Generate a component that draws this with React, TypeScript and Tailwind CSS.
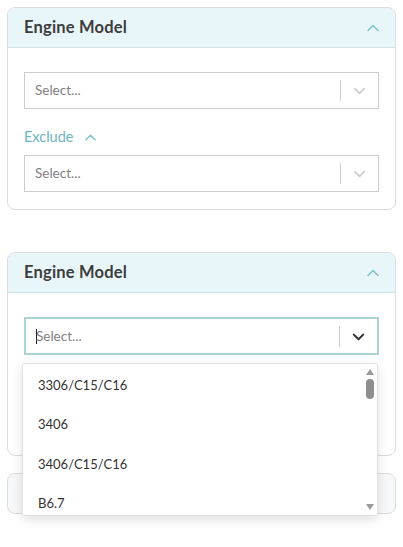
import React from "react";

const font = { fontFamily: "Lato, 'Noto Sans', sans-serif" };

function ChevronUp({ className = "" }: { className?: string }) {
  return (
    <svg viewBox="0 0 16 16" className={className} fill="none" stroke="currentColor" strokeWidth="1.6" strokeLinecap="round" strokeLinejoin="round">
      <path d="M3 10.5 L8 5.5 L13 10.5" />
    </svg>
  );
}

function ChevronDown({ className = "", strokeWidth = 1.6 }: { className?: string; strokeWidth?: number }) {
  return (
    <svg viewBox="0 0 16 16" className={className} fill="none" stroke="currentColor" strokeWidth={strokeWidth} strokeLinecap="round" strokeLinejoin="round">
      <path d="M3 6 L8 11 L13 6" />
    </svg>
  );
}

function SelectBox({ focused = false }: { focused?: boolean }) {
  return (
    <div
      className={
        "flex items-center bg-white " +
        (focused ? "h-[38px] border-2 border-[#a9d4d9]" : "h-[37px] border border-[#cccccc]")
      }
    >
      <div className="flex flex-1 items-center pl-[10px] text-[13.5px] text-[#808080]">
        {focused && <span className="mr-[-1px] inline-block h-[15px] w-[1px] bg-[#222]" />}
        <span>Select...</span>
      </div>
      <div className="h-[21px] w-[1px] bg-[#cccccc]" />
      <div className="flex w-[37px] items-center justify-center">
        {focused ? (
          <ChevronDown className="h-[15px] w-[15px] text-[#333]" strokeWidth={2.2} />
        ) : (
          <ChevronDown className="h-[15px] w-[15px] text-[#cccccc]" strokeWidth={1.8} />
        )}
      </div>
    </div>
  );
}

function Card({ children, header }: { children?: React.ReactNode; header: string }) {
  return (
    <div className="w-[389px] overflow-hidden rounded-[8px] border border-[#dcdcdc] bg-white">
      <div className="flex h-[40px] items-center justify-between border-b border-[#d2e4e8] bg-[#e9f6f9] pl-[16px] pr-[14px]">
        <span className="text-[16.5px] font-bold tracking-[0.2px] text-[#3d3d3d]">{header}</span>
        <ChevronUp className="h-[16px] w-[16px] text-[#7fc4cd]" />
      </div>
      {children}
    </div>
  );
}

function Body({ focused = false, covered = false }: { focused?: boolean; covered?: boolean }) {
  return (
    <div className="px-[16px] pb-[17px] pt-[24px]">
      <SelectBox focused={focused} />
      <div className={"flex h-[46px] items-center gap-[10px] pt-[10px] text-[14.5px] text-[#6cb6c1] " + (covered ? "invisible" : "")}>
        <span>Exclude</span>
        <ChevronUp className="h-[15px] w-[15px] text-[#7fc4cd]" />
      </div>
      <div className={covered ? "invisible" : ""}>
        <SelectBox />
      </div>
    </div>
  );
}

export default function App() {
  const options = ["3306/C15/C16", "3406", "3406/C15/C16", "B6.7"];
  return (
    <div className="h-[547px] w-[403px] overflow-hidden bg-white pl-[7px] pt-[7px]" style={font}>
      <Card header="Engine Model">
        <Body />
      </Card>
      <div className="relative mt-[42px]">
        <Card header="Engine Model">
          <Body focused covered />
        </Card>
        <div className="absolute left-[15px] top-[111px] h-[153px] w-[356px] overflow-hidden rounded-[3px] border border-[#e2e2e2] bg-white shadow-[0_4px_11px_rgba(0,0,0,0.12)]">
          <div className="pt-[1.5px]">
            {options.map((o) => (
              <div key={o} className="flex h-[39.5px] items-center pl-[15px] text-[13px] text-[#333]">
                {o}
              </div>
            ))}
          </div>
          <div className="absolute right-0 top-0 flex h-full w-[14px] flex-col items-center bg-white">
            <div className="mt-[5px] h-0 w-0 border-x-[4px] border-b-[6px] border-x-transparent border-b-[#9a9a9a]" />
            <div className="mt-[4px] h-[20px] w-[8px] rounded-[4px] bg-[#8f8f8f]" />
            <div className="flex-1" />
            <div className="mb-[5px] h-0 w-0 border-x-[4px] border-t-[6px] border-x-transparent border-t-[#9a9a9a]" />
          </div>
        </div>
      </div>
      <div className="mt-[17px] h-[41px] w-[389px] rounded-[8px] border border-[#dcdcdc] bg-[#f7f8f9]" />
    </div>
  );
}
